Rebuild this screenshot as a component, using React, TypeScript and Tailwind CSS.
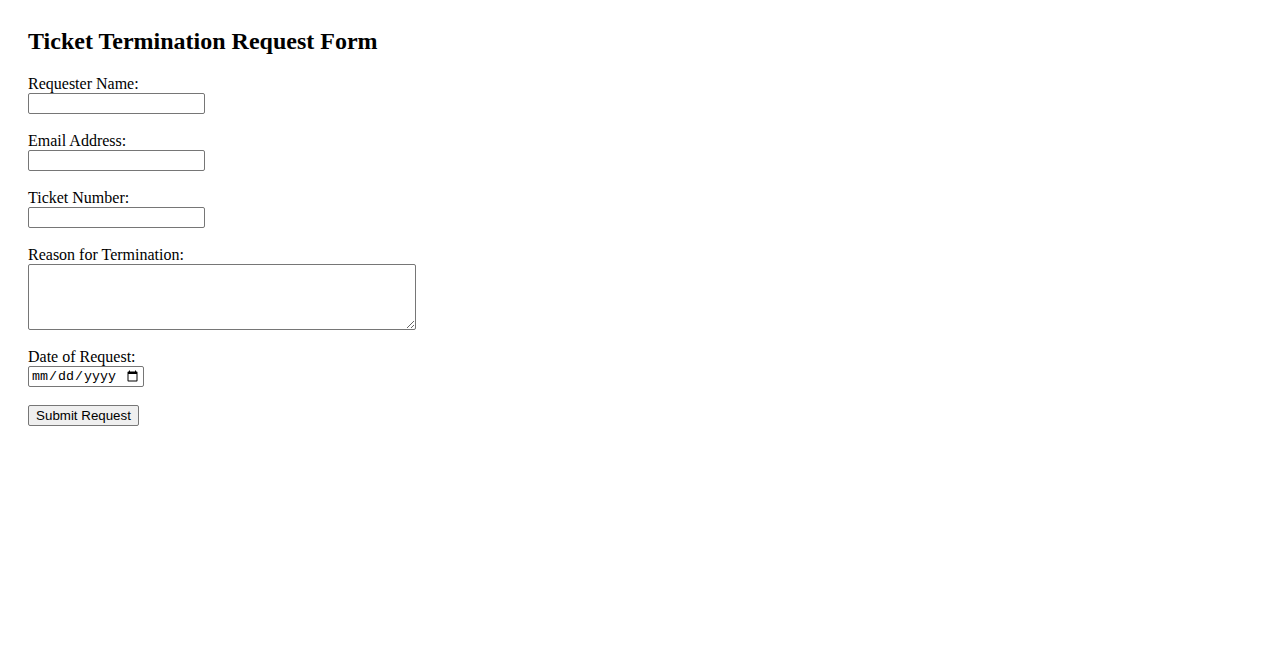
import React from "react";

const serif = "font-['Liberation_Serif','Times_New_Roman',serif]";
const fieldBox =
  "block border border-[#767676] rounded-[2px] bg-white px-[2px] py-[1px] text-[13.33px] font-['Liberation_Sans',Arial,sans-serif] text-black outline-none";

function Field({ label, children }: { label: string; children: React.ReactNode }) {
  return (
    <div className="mb-[18px]">
      <label className="block h-[18px] leading-[18px] text-[16px]">{label}</label>
      {children}
    </div>
  );
}

export default function App() {
  return (
    <div className={`min-h-screen bg-white px-[28px] pt-[28px] text-black ${serif}`}>
      <h2 className="mb-[20px] h-[27px] text-[24px] font-bold leading-[27px]">
        Ticket Termination Request Form
      </h2>
      <form onSubmit={(e) => e.preventDefault()}>
        <Field label="Requester Name:">
          <input type="text" className={`${fieldBox} h-[21px] w-[177px]`} />
        </Field>
        <Field label="Email Address:">
          <input type="email" className={`${fieldBox} h-[21px] w-[177px]`} />
        </Field>
        <Field label="Ticket Number:">
          <input type="text" className={`${fieldBox} h-[21px] w-[177px]`} />
        </Field>
        <Field label="Reason for Termination:">
          <textarea className={`${fieldBox} h-[66px] w-[388px] resize`} />
        </Field>
        <Field label="Date of Request:">
          <input
            type="date"
            className="block h-[21px] w-[116px] rounded-[2px] border border-[#767676] bg-white px-[2px] py-[1px] font-['Liberation_Mono','Courier_New',monospace] text-[13.33px] text-black"
          />
        </Field>
        <button
          type="submit"
          className="block h-[21px] w-[111px] rounded-[2px] border border-[#767676] bg-[#efefef] px-[6px] font-['Liberation_Sans',Arial,sans-serif] text-[13.33px] leading-[19px] text-black"
        >
          Submit Request
        </button>
      </form>
    </div>
  );
}
